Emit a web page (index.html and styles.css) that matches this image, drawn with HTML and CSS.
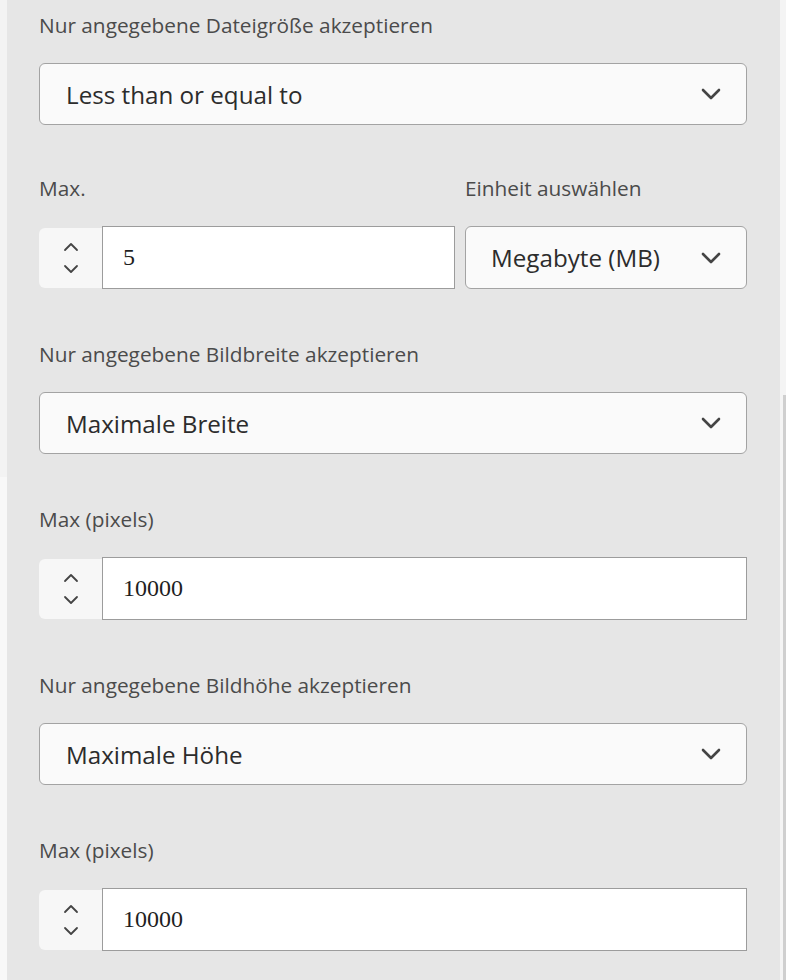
FILE: index.html
```html
<!DOCTYPE html>
<html lang="de">
<head>
<meta charset="utf-8">
<link rel="stylesheet" href="styles.css">
</head>
<body>
<div class="page">
  <div class="edge-left"></div>
  <div class="panel">
    <div class="field first">
      <div class="label">Nur angegebene Dateigröße akzeptieren</div>
      <div class="select">
        <span class="select-text">Less than or equal to</span>
        <svg class="chev" width="20" height="12" viewBox="0 0 20 12"><path d="M2 2 L10 10 L18 2" fill="none" stroke="#444" stroke-width="2.6" stroke-linecap="round" stroke-linejoin="round"/></svg>
      </div>
    </div>

    <div class="field row2">
      <div class="col-num">
        <div class="label">Max.</div>
        <div class="numrow">
          <div class="stepper">
            <svg width="16" height="34" viewBox="0 0 16 34"><path d="M2 9 L8 3 L14 9" fill="none" stroke="#444" stroke-width="1.8" stroke-linecap="round" stroke-linejoin="round"/><path d="M2 25 L8 31 L14 25" fill="none" stroke="#444" stroke-width="1.8" stroke-linecap="round" stroke-linejoin="round"/></svg>
          </div>
          <div class="numinput">5</div>
        </div>
      </div>
      <div class="col-unit">
        <div class="label">Einheit auswählen</div>
        <div class="select unit">
          <span class="select-text">Megabyte (MB)</span>
          <svg class="chev" width="20" height="12" viewBox="0 0 20 12"><path d="M2 2 L10 10 L18 2" fill="none" stroke="#444" stroke-width="2.6" stroke-linecap="round" stroke-linejoin="round"/></svg>
        </div>
      </div>
    </div>

    <div class="field">
      <div class="label">Nur angegebene Bildbreite akzeptieren</div>
      <div class="select">
        <span class="select-text">Maximale Breite</span>
        <svg class="chev" width="20" height="12" viewBox="0 0 20 12"><path d="M2 2 L10 10 L18 2" fill="none" stroke="#444" stroke-width="2.6" stroke-linecap="round" stroke-linejoin="round"/></svg>
      </div>
    </div>

    <div class="field">
      <div class="label">Max (pixels)</div>
      <div class="numrow">
        <div class="stepper">
          <svg width="16" height="34" viewBox="0 0 16 34"><path d="M2 9 L8 3 L14 9" fill="none" stroke="#444" stroke-width="1.8" stroke-linecap="round" stroke-linejoin="round"/><path d="M2 25 L8 31 L14 25" fill="none" stroke="#444" stroke-width="1.8" stroke-linecap="round" stroke-linejoin="round"/></svg>
        </div>
        <div class="numinput">10000</div>
      </div>
    </div>

    <div class="field">
      <div class="label">Nur angegebene Bildhöhe akzeptieren</div>
      <div class="select">
        <span class="select-text">Maximale Höhe</span>
        <svg class="chev" width="20" height="12" viewBox="0 0 20 12"><path d="M2 2 L10 10 L18 2" fill="none" stroke="#444" stroke-width="2.6" stroke-linecap="round" stroke-linejoin="round"/></svg>
      </div>
    </div>

    <div class="field">
      <div class="label">Max (pixels)</div>
      <div class="numrow">
        <div class="stepper">
          <svg width="16" height="34" viewBox="0 0 16 34"><path d="M2 9 L8 3 L14 9" fill="none" stroke="#444" stroke-width="1.8" stroke-linecap="round" stroke-linejoin="round"/><path d="M2 25 L8 31 L14 25" fill="none" stroke="#444" stroke-width="1.8" stroke-linecap="round" stroke-linejoin="round"/></svg>
        </div>
        <div class="numinput">10000</div>
      </div>
    </div>
  </div>
  <div class="edge-right">
    <div class="scroll-track"></div>
  </div>
</div>
</body>
</html>
```

FILE: styles.css
```css
html, body {
  margin: 0;
  padding: 0;
  height: 980px;
  overflow: hidden;
  background: #e6e6e6;
}
.page {
  display: flex;
  height: 980px;
  font-family: "Open Sans", "Noto Sans", sans-serif;
}
.edge-left {
  width: 7px;
  background: linear-gradient(#f3f3f3 0, #f3f3f3 477px, #f8f8f8 477px);
  flex: none;
}
.panel {
  flex: 1;
  background: #e6e6e6;
  padding: 13px 33px 0 32px;
}
.edge-right {
  width: 6px;
  flex: none;
  background: #f4f4f4;
  display: flex;
  justify-content: flex-end;
}
.scroll-track {
  width: 3px;
  margin-top: 395px;
  background: #cfcfcf;
  height: 585px;
}
.field {
  margin-bottom: 53px;
}
.field.first {
  margin-bottom: 51px;
}
.label {
  font-size: 20.8px;
  line-height: 24px;
  color: #4b4b4b;
  margin-bottom: 26px;
  white-space: nowrap;
}
.select {
  box-sizing: border-box;
  height: 62px;
  background: #fafafa;
  border: 1.5px solid #a3a3a3;
  border-radius: 6px;
  display: flex;
  align-items: center;
  justify-content: space-between;
  padding: 0 25px 0 26px;
}
.select-text {
  font-size: 24.2px;
  color: #2c2c2c;
}
.chev {
  display: block;
}
.row2 {
  display: flex;
  gap: 10px;
}
.col-num {
  width: 416px;
  flex: none;
}
.col-unit {
  flex: 1;
}
.unit {
  height: 63px;
  padding: 0 25px 0 25px;
}
.numrow {
  display: flex;
  height: 63px;
}
.stepper {
  width: 63px;
  flex: none;
  background: #f7f7f7;
  border-radius: 6px 0 0 6px;
  margin: 2px 0 1px;
  display: flex;
  align-items: center;
  justify-content: center;
}
.stepper svg {
  display: block;
}
.numinput {
  flex: 1;
  box-sizing: border-box;
  background: #ffffff;
  border: 1.5px solid #9c9c9c;
  display: flex;
  align-items: center;
  padding-left: 20px;
  font-family: "Liberation Serif", "DejaVu Serif", serif;
  font-size: 24px;
  color: #1f1f1f;
}
```
